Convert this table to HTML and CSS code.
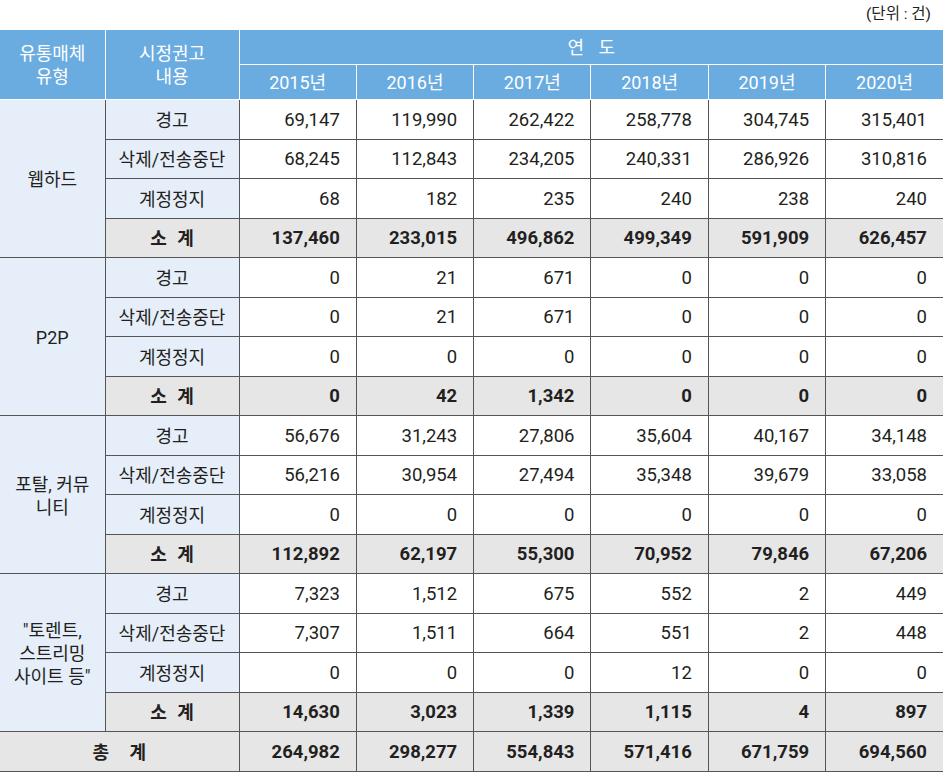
FILE: index.html
```html
<!DOCTYPE html>
<html lang="ko">
<head>
<meta charset="utf-8">
<title>시정권고 현황</title>
<link rel="stylesheet" href="styles.css">
</head>
<body>
<div class="unit">(단위 : 건)</div>
<table class="stats">
  <colgroup>
    <col class="c-type"><col class="c-kind">
    <col><col><col><col><col><col>
  </colgroup>
  <thead>
    <tr class="h1">
      <th rowspan="2" class="first">유통매체<br>유형</th>
      <th rowspan="2">시정권고<br>내용</th>
      <th colspan="6" class="last year-head">연 도</th>
    </tr>
    <tr class="h2">
      <th>2015년</th><th>2016년</th><th>2017년</th><th>2018년</th><th>2019년</th><th class="last">2020년</th>
    </tr>
  </thead>
  <tbody>
    <tr><td rowspan="4" class="type">웹하드</td><td class="kind">경고</td><td class="num">69,147</td><td class="num">119,990</td><td class="num">262,422</td><td class="num">258,778</td><td class="num">304,745</td><td class="num last">315,401</td></tr>
    <tr><td class="kind">삭제/전송중단</td><td class="num">68,245</td><td class="num">112,843</td><td class="num">234,205</td><td class="num">240,331</td><td class="num">286,926</td><td class="num last">310,816</td></tr>
    <tr><td class="kind">계정정지</td><td class="num">68</td><td class="num">182</td><td class="num">235</td><td class="num">240</td><td class="num">238</td><td class="num last">240</td></tr>
    <tr class="sum"><td class="kind">소 계</td><td class="num">137,460</td><td class="num">233,015</td><td class="num">496,862</td><td class="num">499,349</td><td class="num">591,909</td><td class="num last">626,457</td></tr>

    <tr><td rowspan="4" class="type">P2P</td><td class="kind">경고</td><td class="num">0</td><td class="num">21</td><td class="num">671</td><td class="num">0</td><td class="num">0</td><td class="num last">0</td></tr>
    <tr><td class="kind">삭제/전송중단</td><td class="num">0</td><td class="num">21</td><td class="num">671</td><td class="num">0</td><td class="num">0</td><td class="num last">0</td></tr>
    <tr><td class="kind">계정정지</td><td class="num">0</td><td class="num">0</td><td class="num">0</td><td class="num">0</td><td class="num">0</td><td class="num last">0</td></tr>
    <tr class="sum"><td class="kind">소 계</td><td class="num">0</td><td class="num">42</td><td class="num">1,342</td><td class="num">0</td><td class="num">0</td><td class="num last">0</td></tr>

    <tr><td rowspan="4" class="type">포탈, 커뮤<br>니티</td><td class="kind">경고</td><td class="num">56,676</td><td class="num">31,243</td><td class="num">27,806</td><td class="num">35,604</td><td class="num">40,167</td><td class="num last">34,148</td></tr>
    <tr><td class="kind">삭제/전송중단</td><td class="num">56,216</td><td class="num">30,954</td><td class="num">27,494</td><td class="num">35,348</td><td class="num">39,679</td><td class="num last">33,058</td></tr>
    <tr><td class="kind">계정정지</td><td class="num">0</td><td class="num">0</td><td class="num">0</td><td class="num">0</td><td class="num">0</td><td class="num last">0</td></tr>
    <tr class="sum"><td class="kind">소 계</td><td class="num">112,892</td><td class="num">62,197</td><td class="num">55,300</td><td class="num">70,952</td><td class="num">79,846</td><td class="num last">67,206</td></tr>

    <tr><td rowspan="4" class="type">"토렌트,<br>스트리밍<br>사이트 등"</td><td class="kind">경고</td><td class="num">7,323</td><td class="num">1,512</td><td class="num">675</td><td class="num">552</td><td class="num">2</td><td class="num last">449</td></tr>
    <tr><td class="kind">삭제/전송중단</td><td class="num">7,307</td><td class="num">1,511</td><td class="num">664</td><td class="num">551</td><td class="num">2</td><td class="num last">448</td></tr>
    <tr><td class="kind">계정정지</td><td class="num">0</td><td class="num">0</td><td class="num">0</td><td class="num">12</td><td class="num">0</td><td class="num last">0</td></tr>
    <tr class="sum"><td class="kind">소 계</td><td class="num">14,630</td><td class="num">3,023</td><td class="num">1,339</td><td class="num">1,115</td><td class="num">4</td><td class="num last">897</td></tr>

    <tr class="total"><td colspan="2" class="type total-label">총 계</td><td class="num">264,982</td><td class="num">298,277</td><td class="num">554,843</td><td class="num">571,416</td><td class="num">671,759</td><td class="num last">694,560</td></tr>
  </tbody>
</table>
</body>
</html>
```

FILE: styles.css
```css
html, body {
  margin: 0;
  padding: 0;
  background: #ffffff;
}

body {
  width: 947px;
  font-family: Roboto, "Noto Sans CJK KR", sans-serif;
  color: #231f20;
}

.unit {
  height: 30px;
  line-height: 28px;
  font-size: 15.5px;
  text-align: right;
  padding-right: 16px;
  color: #231f20;
}

.stats {
  border-collapse: collapse;
  table-layout: fixed;
  width: 943px;
  font-size: 18px;
}

.c-type { width: 105px; }
.c-kind { width: 134px; }

.stats th {
  background: #6aacdf;
  color: #ffffff;
  font-weight: normal;
  border: 1px solid #ffffff;
  border-top: none;
  line-height: 23px;
  padding: 0;
  text-align: center;
}

.stats th.first { border-left: none; }
.stats th.last { border-right: none; }

.stats th.year-head { word-spacing: 10px; }

.h1 th { height: 34px; }
.h2 th { height: 34px; }

.stats td {
  border: 1px solid #555555;
  height: 36.5px;
  padding: 2px 0 0;
  text-align: center;
  line-height: 23px;
}

.stats td.type {
  background: #e6eef9;
  border-left: none;
}

.stats td.kind {
  background: #e6eef9;
}

.stats td.num {
  text-align: right;
  padding-right: 16px;
  font-size: 18.5px;
}

.stats td.last {
  border-right: none;
}

.sum td,
.sum td.kind,
.total td,
.total td.type {
  background: #e6e6e6;
  font-weight: bold;
}

.sum td.kind {
  word-spacing: 6px;
}

.total td.total-label {
  word-spacing: 16px;
}
```
